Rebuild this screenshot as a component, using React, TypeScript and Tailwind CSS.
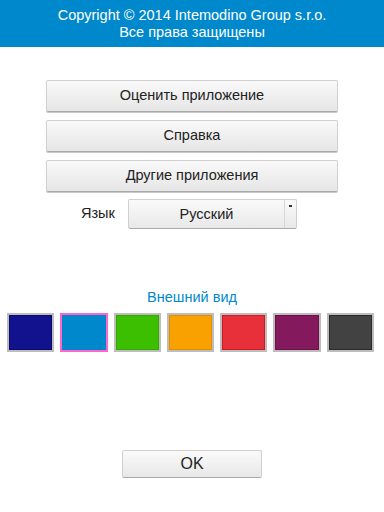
import { useState } from 'react';

const swatches = [
  { bg: 'bg-[#12128f]', inner: 'border-[#0a0a70]' },
  { bg: 'bg-[#0088cc]', inner: 'border-[#0077b8]' },
  { bg: 'bg-[#3cbf00]', inner: 'border-[#33a800]' },
  { bg: 'bg-[#f9a100]', inner: 'border-[#e09000]' },
  { bg: 'bg-[#e8303a]', inner: 'border-[#cc1a26]' },
  { bg: 'bg-[#85195e]', inner: 'border-[#6e0f4c]' },
  { bg: 'bg-[#424242]', inner: 'border-[#2a2a2a]' },
];

const btn =
  'w-full h-8 flex items-center justify-center text-[14.5px] text-[#222] bg-gradient-to-b from-[#f9f9f9] to-[#e6e6e6] border border-[#cfcfcf] border-b-[#aaa] rounded-[2px] shadow-[0_1px_0_#c8c8c8]';

export default function App() {
  const [selected, setSelected] = useState(1);

  return (
    <div className="w-[384px] h-[512px] bg-white flex flex-col font-['Liberation_Sans',Arial,sans-serif]">
      {/* header */}
      <div className="h-[47px] bg-[#0088cc] text-white text-[14.5px] leading-[17px] flex flex-col items-center justify-center pt-[1px]">
        <div>Copyright © 2014 Intemodino Group s.r.o.</div>
        <div>Все права защищены</div>
      </div>

      <div className="pt-[33px] px-[46px] flex flex-col gap-2">
        <button className={btn}>Оценить приложение</button>
        <button className={btn}>Справка</button>
        <button className={btn}>Другие приложения</button>
      </div>

      <div className="mt-[7px] flex items-center pl-[81px]">
        <span className="text-[14.5px] text-[#222] w-[47px]">Язык</span>
        <div className="w-[169px] h-[30px] flex bg-gradient-to-b from-[#fafafa] to-[#e8e8e8] border border-[#cfcfcf] border-b-[#aaa] rounded-[2px]">
          <div className="flex-1 flex items-start justify-center pt-[4px] text-[14.5px] text-[#222]">
            Русский
          </div>
          <div className="w-[12px] border-l border-[#d6d6d6] flex justify-center pt-[5px]">
            <div className="w-[3px] h-[2px] bg-[#333]" />
          </div>
        </div>
      </div>

      <div className="mt-[58px] text-center text-[14.5px] text-[#0088cc]">Внешний вид</div>

      <div className="mt-[4px] ml-[7px] w-[367px] grid grid-cols-7 gap-[6px]">
        {swatches.map((s, i) => (
          <button
            key={i}
            onClick={() => setSelected(i)}
            className={`h-[39px] border-2 ${i === selected ? 'border-[#ff66cc]' : 'border-[#bdbdbd]'}`}
          >
            <div className={`w-full h-full ${s.bg} border ${i === selected ? 'border-transparent' : s.inner}`} />
          </button>
        ))}
      </div>

      <div className="mt-[98px] flex justify-center">
        <button className="w-[140px] h-[28px] flex items-center justify-center text-[16px] text-[#222] bg-gradient-to-b from-[#fafafa] to-[#e8e8e8] border border-[#cfcfcf] border-b-[#aaa] rounded-[2px]">
          OK
        </button>
      </div>
    </div>
  );
}
